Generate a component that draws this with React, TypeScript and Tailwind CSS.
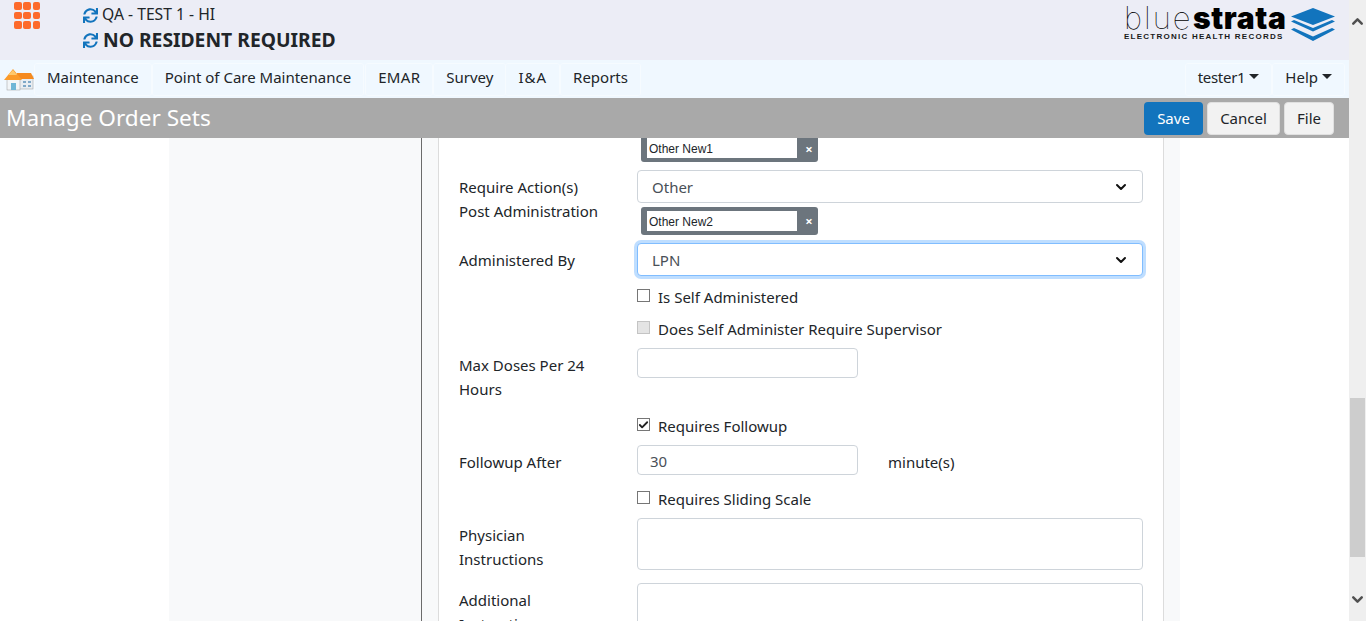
import React from "react";
import { ChevronDown, ChevronUp, Check } from "lucide-react";
import { FaSync } from "react-icons/fa";

const font = "font-['Noto_Sans','Open_Sans',sans-serif]";

function Logo() {
    return (
        <div className="flex items-start gap-[3px]">
            <div className="flex flex-col items-start w-[164px]">
                <div className="flex items-baseline h-[26px] leading-[26px] text-black whitespace-nowrap font-['Inter',sans-serif]">
                    <span className="text-[31px] font-thin w-[69px] tracking-[2px]">blue</span>
                    <span className="text-[30px] font-black w-[93px] tracking-[0.6px]">strata</span>
                </div>
                <div className="text-[8px] leading-[10px] mt-[1px] font-bold tracking-[1.25px] text-[#1a1a1a] font-['Liberation_Sans',sans-serif] whitespace-nowrap">
                    ELECTRONIC HEALTH RECORDS
                </div>
            </div>
            <svg viewBox="0 0 44 34" className="w-[44px] h-[34px] mt-[3px]">
                <path d="M22 0 L44 8.500 L22 17 L0 8.500 Z" fill="#1274bd" />
                <path d="M3 12 L22 20 L41 12 L44 13.500 L22 23.500 L0 13.500 Z" fill="#1274bd" />
                <path d="M3 20 L22 28.500 L41 20 L44 21.500 L22 33 L0 21.500 Z" fill="#1274bd" />
            </svg>
        </div>
    );
}

function House() {
    return (
        <svg viewBox="0 0 30 24" className="w-[30px] h-[24px] shrink-0">
            <rect x="14" y="9" width="15" height="13" fill="#e8edf2" stroke="#9a9a9a" strokeWidth="0.5" />
            <path d="M13 6 H27 L30 12 H13 Z" fill="#f58a1f" />
            <rect x="3" y="11" width="13" height="12" fill="#f2f5f7" stroke="#9a9a9a" strokeWidth="0.5" />
            <path d="M0 13 L9 2 L18 13 Z" fill="#fb9b2a" />
            <path d="M4 8 L9 3 L13 8 Z" fill="#ffc86b" />
            <rect x="7" y="16" width="5" height="7" fill="#6fb6d6" />
            <rect x="19" y="14" width="3" height="2" fill="#7fa8c8" />
            <rect x="24" y="14" width="3" height="2" fill="#7fa8c8" />
            <rect x="19" y="18" width="3" height="2" fill="#7fa8c8" />
            <rect x="24" y="18" width="3" height="2" fill="#7fa8c8" />
        </svg>
    );
}

function NavItem({ label, caret, className }: { label: string; caret?: boolean; className?: string }) {
    return (
        <div className={`h-[33px] flex items-center gap-[4px] px-[12px] pb-[3px] rounded-[3px] border border-[#f6fbff] text-[#212529] whitespace-nowrap ${className ?? ""}`}>
            {label}
            {caret && <span className="w-0 h-0 mb-[2px] border-x-[5px] border-x-transparent border-t-[5px] border-t-[#212529]" />}
        </div>
    );
}

function Chip({ label, cut }: { label: string; cut?: boolean }) {
    return (
        <div className={`w-[177px] flex bg-[#6c757d] rounded-[3px] pl-[6px] ${cut ? "h-[24px] rounded-t-none" : "h-[28px] pt-[4px]"}`}>
            <div className="w-[150px] bg-white text-[12px] leading-[22px] pl-[2px] text-[#212529] font-['Liberation_Sans',sans-serif] h-[20px]">{label}</div>
            <div className={`flex-1 flex items-center justify-center pl-[3px] text-white text-[13px] font-bold leading-none ${cut ? "h-[22px]" : "h-[20px]"}`}>×</div>
        </div>
    );
}

function Select({ value, focused }: { value: string; focused?: boolean }) {
    return (
        <div className={`w-[506px] h-[33px] rounded-[4px] border flex items-center justify-between pl-[14px] pr-[13px] bg-white text-[#495057] ${focused ? "border-[#80bdff] shadow-[0_0_0_3px_rgba(0,123,255,0.25)]" : "border-[#ced4da]"}`}>
            {value}
            <ChevronDown size={16} strokeWidth={3} className="text-[#111]" />
        </div>
    );
}

function CheckRow({ label, checked, disabled, className }: { label: string; checked?: boolean; disabled?: boolean; className?: string }) {
    return (
        <div className={`flex items-center ml-[178px] h-[24px] ${className ?? ""}`}>
            <span className={`w-[13px] h-[13px] mb-[3px] mr-[8px] border flex items-center justify-center ${disabled ? "border-[#c4c4c4] bg-[#e4e4e4]" : "border-[#767676] bg-white"}`}>
                {checked && <Check size={12} strokeWidth={4} className="text-[#222]" />}
            </span>
            {label}
        </div>
    );
}

export default function App() {
    return (
        <div className={`h-[621px] w-[1366px] overflow-hidden flex bg-white text-[15px] text-[#212529] ${font}`}>
            <div className="w-[1349px] shrink-0 flex flex-col">
                {/* Header */}
                <div className="h-[60px] bg-[#ecedf6] flex shrink-0">
                    <div className="w-[83px] pl-[14px] pt-[2px]">
                        <div className="grid grid-cols-3 gap-[2px] w-[26px]">
                            {Array.from({ length: 9 }).map((_, i) => (
                                <span key={i} className="w-[7.5px] h-[7.5px] rounded-[2px] bg-[#fd6a2b]" />
                            ))}
                        </div>
                    </div>
                    <div className="flex-1 pt-[4px]">
                        <div className="flex items-center gap-[4px] h-[22px] text-[15.7px]"><FaSync size={15} className="text-[#1274bd]" />QA - TEST 1 - HI</div>
                        <div className="flex items-center gap-[5px] h-[28px] text-[19.3px] font-bold"><FaSync size={15} className="text-[#1274bd]" />NO RESIDENT REQUIRED</div>
                    </div>
                    <div className="pt-[5px] pr-[14px]"><Logo /></div>
                </div>
                {/* Nav */}
                <div className="h-[38px] bg-[#f0f8ff] flex items-center shrink-0 px-[4px]">
                    <House />
                    <NavItem label="Maintenance" />
                    <NavItem label="Point of Care Maintenance" />
                    <NavItem label="EMAR" className="ml-[1px] tracking-[0.3px]" />
                    <NavItem label="Survey" />
                    <NavItem label="I&A" className="-ml-[1px] tracking-[1px]" />
                    <NavItem label="Reports" />
                    <div className="ml-auto flex">
                        <NavItem label="tester1" caret className="tracking-[-0.3px]" />
                        <NavItem label="Help" caret />
                    </div>
                </div>
                {/* Title bar */}
                <div className="h-[40px] bg-[#a9a9a9] flex items-center shrink-0 pl-[6px] pr-[15px] relative z-10">
                    <div className="text-[22.6px] text-white flex-1">Manage Order Sets</div>
                    <div className="flex gap-[4px]">
                        <div className="h-[33px] w-[59px] rounded-[4px] bg-[#1274bd] text-white flex items-center justify-center">Save</div>
                        <div className="h-[33px] w-[73px] rounded-[4px] bg-[#f2f2f2] border border-[#e0e0e0] flex items-center justify-center">Cancel</div>
                        <div className="h-[33px] w-[50px] rounded-[4px] bg-[#f2f2f2] border border-[#e0e0e0] flex items-center justify-center">File</div>
                    </div>
                </div>
                {/* Body */}
                <div className="flex-1 flex min-h-0 overflow-hidden">
                    <div className="w-[169px] shrink-0" />
                    <div className="w-[252px] shrink-0 bg-[#f8f9fa] border-r border-[#6b6b6b] box-content" />
                    <div className="w-[758px] shrink-0 bg-[#f8f9fa] px-[16px]">
                        <div className="bg-white border-x border-[#dcdcdc] h-full px-[20px] overflow-hidden leading-[24px]">
                            <div className="ml-[178px] pl-[4px] mb-[8px]"><Chip label="Other New1" cut /></div>
                            <div className="flex">
                                <div className="w-[178px] pt-[5px] pr-[10px]">Require Action(s)<br />Post Administration</div>
                                <div>
                                    <Select value="Other" />
                                    <div className="ml-[4px] mt-[4px]"><Chip label="Other New2" /></div>
                                </div>
                            </div>
                            <div className="flex items-center mt-[8px]">
                                <div className="w-[178px]">Administered By</div>
                                <Select value="LPN" focused />
                            </div>
                            <CheckRow label="Is Self Administered" className="mt-[9px]" />
                            <CheckRow label="Does Self Administer Require Supervisor" disabled className="mt-[8px]" />
                            <div className="flex mt-[7px]">
                                <div className="w-[178px] pt-[5px] pr-[30px]">Max Doses Per 24 Hours</div>
                                <div className="w-[221px] h-[30px] rounded-[4px] border border-[#ced4da]" />
                            </div>
                            <CheckRow label="Requires Followup" checked className="mt-[13px]" />
                            <div className="flex items-center mt-[7px] h-[30px]">
                                <div className="w-[178px] pt-[4px]">Followup After</div>
                                <div className="w-[221px] h-[30px] rounded-[4px] border border-[#ced4da] pl-[12px] pt-[2px] flex items-center text-[#495057]">30</div>
                                <div className="ml-[30px] pt-[4px]">minute(s)</div>
                            </div>
                            <CheckRow label="Requires Sliding Scale" className="mt-[12px]" />
                            <div className="flex mt-[7px]">
                                <div className="w-[178px] pt-[5px] pr-[60px]">Physician Instructions</div>
                                <div className="w-[506px] h-[52px] rounded-[4px] border border-[#ced4da]" />
                            </div>
                            <div className="flex mt-[12px]">
                                <div className="w-[178px] pt-[5px] pr-[60px]">Additional Instructions</div>
                                <div className="w-[506px] h-[52px] rounded-[4px] border border-[#ced4da]" />
                            </div>
                        </div>
                    </div>
                </div>
            </div>
            {/* Scrollbar */}
            <div className="w-[17px] bg-[#efefef] flex flex-col items-center">
                <ChevronUp size={17} strokeWidth={3.5} className="text-[#505050] mt-[13px]" />
                <div className="w-[15px] h-[159px] bg-[#cdcdcd] mt-[368px]" />
                <ChevronDown size={17} strokeWidth={3.5} className="text-[#505050] mt-[34px]" />
            </div>
        </div>
    );
}
